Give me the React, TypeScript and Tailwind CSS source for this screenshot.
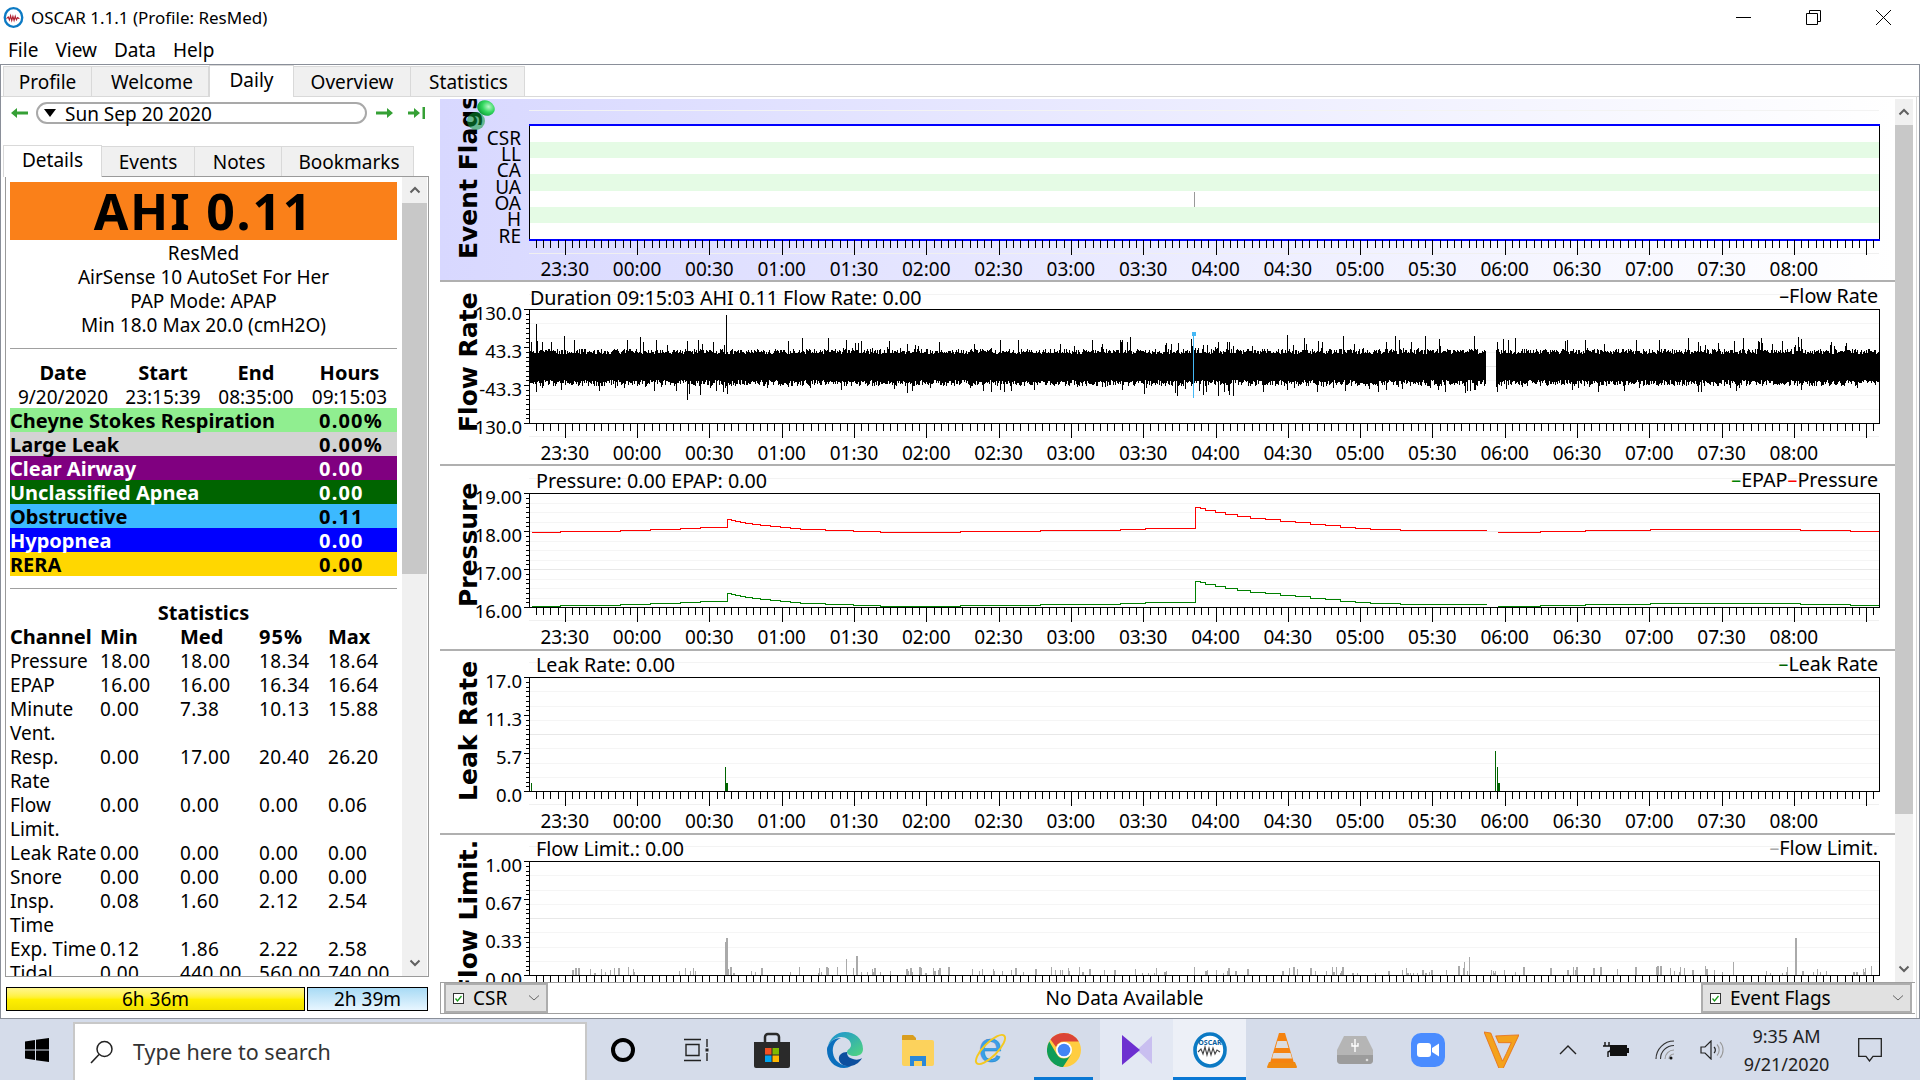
import React from "react";

const times = ["23:30","00:00","00:30","01:00","01:30","02:00","02:30","03:00","03:30","04:00","04:30","05:00","05:30","06:00","06:30","07:00","07:30","08:00"];
const tickBase = 564.8;
const tickStep = 7.23;
const boxLeft = 529;
const boxRight = 1879;

function rng(seed: number) {
  let s = seed;
  return () => {
    s = (s + 0x6d2b79f5) | 0;
    let t = Math.imul(s ^ (s >>> 15), 1 | s);
    t = (t + Math.imul(t ^ (t >>> 7), 61 | t)) ^ t;
    return ((t ^ (t >>> 14)) >>> 0) / 4294967296;
  };
}

function flowPath() {
  const r = rng(11);
  let d = "";
  for (let x = boxLeft + 1; x < boxRight; x++) {
    if (x >= 1486 && x < 1496) continue;
    let top = 354 - r() * 5;
    let bot = 380 + r() * 6;
    if (r() < 0.09) top -= r() * 14;
    if (r() < 0.1) bot += r() * 9;
    d += `M${x} ${top.toFixed(0)}V${bot.toFixed(0)}`;
  }
  const spikes: [number, number, number][] = [
    [536, 324, 392], [726, 315, 385], [687, 341, 400], [643, 342, 380], [1122, 340, 390],
    [1287, 335, 390], [1474, 336, 388], [1497, 342, 392], [1218, 342, 396], [1233, 346, 396],
    [700, 350, 395], [1177, 350, 396], [1229, 342, 395], [1203, 345, 395], [1386, 342, 390],
  ];
  spikes.forEach(([x, a, b]) => (d += `M${x} ${a}V${b}`));
  return d;
}

const pressure: [number, number][] = [
  [532,532],[560,531.5],[590,531],[620,530],[650,529.5],[680,528],[700,527],[727,526],[727,519],[735,521],[745,523],[760,525],[780,527],[800,529],[825,530],[853,531],[880,532],[920,532],[960,531],[1000,531],[1040,530],[1080,530],[1120,529],[1145,528],[1195,527],[1195,507],[1205,510],[1225,514],[1250,518],[1280,521],[1310,524],[1340,527],[1370,529],[1400,530],[1440,530.5],[1486,531],
];
const pressure2: [number, number][] = [[1498,532],[1540,531],[1585,530],[1650,529],[1700,529],[1760,529],[1800,530],[1850,531],[1879,532]];

function steps(pts: [number, number][], dy: number) {
  let d = "";
  pts.forEach(([x, y], i) => {
    if (i === 0) {
      d = `M${x} ${y + dy}`;
      return;
    }
    const [px, py] = pts[i - 1];
    if (x !== px && Math.abs(y - py) >= 2) {
      const mx = (x + px) / 2;
      d += `H${mx}V${(y + py) / 2 + dy}`;
    }
    d += `H${x}V${y + dy}`;
  });
  return d;
}

type GraphProps = {
  top: number;
  height: number;
  boxTop: number;
  label: string;
  labelStart: number;
  title?: string;
  titleX?: number;
  titleY?: number;
  yLabels?: string[];
  divisions?: number;
  major?: number[];
  legend?: { name: string; color: string }[];
  flags?: boolean;
  overlay?: React.ReactNode;
  children?: React.ReactNode;
};

function Graph({ top, height, boxTop, label, labelStart, title, titleX = 536, titleY, yLabels = [], divisions = 8, major = [4], legend = [], flags, overlay, children }: GraphProps) {
  const boxBottom = boxTop + (flags ? 115 : 114);
  let minor = "";
  let majorTicks = "";
  for (let k = -4; k <= 181; k++) {
    const x = Math.round(tickBase + k * tickStep) + 0.5;
    if (k % 10 === 0) majorTicks += `M${x} ${boxBottom}v15`;
    else minor += `M${x} ${boxBottom}v8`;
  }
  const grid: React.ReactNode[] = [];
  let yTicks = "";
  if (!flags) {
    for (let i = 1; i < divisions; i++) {
      const y = Math.round(boxTop + (i * 114) / divisions) + 0.5;
      grid.push(<line key={i} x1={boxLeft} x2={boxRight} y1={y} y2={y} stroke={major.includes(i) ? "#e8e8e8" : "#f5f5f5"} />);
    }
    for (let i = 0; i <= 24; i++) {
      const y = Math.round(boxTop + (i * 114) / 24) + 0.5;
      yTicks += `M${boxLeft} ${y}h${i % 8 === 0 ? -5 : -3}`;
    }
  }
  return (
    <svg viewBox={`440 ${top} 1455 ${height}`} width={1455} height={height} className="block">
      <line x1={boxLeft} x2={boxRight} y1={boxTop - 14.5} y2={boxTop - 14.5} stroke="#f3f3f3" />
      <line x1={boxLeft} x2={boxRight} y1={boxBottom + 13.5} y2={boxBottom + 13.5} stroke="#f0f0f0" />
      {flags && <rect x={boxLeft} y={boxTop} width={boxRight - boxLeft} height={boxBottom - boxTop} fill="#fff" />}
      {grid}
      {children}
      <rect x={boxLeft + 0.5} y={boxTop + 0.5} width={boxRight - boxLeft} height={boxBottom - boxTop} fill="none" stroke="#000" shapeRendering="crispEdges" />
      {flags && (
        <>
          <rect x={boxLeft} y={boxTop - 1} width={boxRight - boxLeft + 1} height={2} fill="#0000ff" />
          <rect x={boxLeft} y={boxBottom - 1} width={boxRight - boxLeft + 1} height={2} fill="#0000ff" />
        </>
      )}
      <path d={minor + majorTicks + yTicks} stroke="#000" fill="none" shapeRendering="crispEdges" />
      {times.map((t, i) => (
        <text key={t} x={tickBase + i * 72.3} y={boxBottom + (flags ? 29 : 30)} textAnchor="middle" dominantBaseline="central" className="text-[19px]">{t}</text>
      ))}
      {yLabels.map((t, i) => (
        <text key={t} x={522} y={boxTop + 3.5 + i * 38} textAnchor="end" dominantBaseline="central" className="text-[18.5px]">{t}</text>
      ))}
      <text transform={`translate(477 ${labelStart}) rotate(-90)`} className="text-[25px] font-bold font-['DejaVu_Sans',sans-serif]">{label}</text>
      {title && <text x={titleX} y={titleY ?? boxTop - 13} dominantBaseline="central" className="text-[19.7px]">{title}</text>}
      {legend.length > 0 && (
        <text x={1878} y={boxTop - 14} textAnchor="end" dominantBaseline="central" className="text-[19.7px]">
          {legend.map((l) => (
            <React.Fragment key={l.name}>
              <tspan fill={l.color}>–</tspan>
              <tspan>{l.name}</tspan>
            </React.Fragment>
          ))}
        </text>
      )}
      {overlay}
    </svg>
  );
}

function EventFlags() {
  const tags = ["CSR", "LL", "CA", "UA", "OA", "H", "RE"];
  const ys = [138, 154, 170, 187, 203, 219, 236];
  return (
    <Graph top={99} height={181} boxTop={125} label="Event Flags" labelStart={259} flags
      overlay={
        <>
          <defs>
            <radialGradient id="pinTop" cx="0.6" cy="0.35" r="0.7">
              <stop offset="0" stopColor="#b8f7c8" />
              <stop offset="0.5" stopColor="#35d860" />
              <stop offset="1" stopColor="#0a9a35" />
            </radialGradient>
          </defs>
          <ellipse cx={476} cy={121} rx={9} ry={9} fill="#0a9a35" fillOpacity={0.55} />
          <ellipse cx={486} cy={108} rx={9} ry={7.5} transform="rotate(25 486 108)" fill="url(#pinTop)" />
        </>
      }>
      <rect x={530} y={142} width={1349} height={16} fill="#e5fbe5" />
      <rect x={530} y={174} width={1349} height={17} fill="#e5fbe5" />
      <rect x={530} y={207} width={1349} height={16} fill="#e5fbe5" />
      <line x1={1194.5} x2={1194.5} y1={192} y2={207} stroke="#999" />
      {tags.map((t, i) => (
        <text key={t} x={521} y={ys[i]} textAnchor="end" dominantBaseline="central" className="text-[19px]">{t}</text>
      ))}
    </Graph>
  );
}

function FlowGraph() {
  return (
    <Graph top={282} height={182} boxTop={309} label="Flow Rate" labelStart={432} title="Duration 09:15:03 AHI 0.11 Flow Rate: 0.00" titleX={530} titleY={297}
      yLabels={["130.0", "43.3", "-43.3", "-130.0"]} legend={[{ name: "Flow Rate", color: "#000" }]}>
      <path d={flowPath()} stroke="#000" strokeWidth={1} shapeRendering="crispEdges" />
      <line x1={1193.5} x2={1193.5} y1={333} y2={398} stroke="#45b8f5" strokeWidth={1} />
      <rect x={1192} y={332} width={4} height={4} fill="#45b8f5" />
    </Graph>
  );
}

function PressureGraph() {
  return (
    <Graph top={466} height={183} boxTop={493} label="Pressure" labelStart={607} title="Pressure: 0.00 EPAP: 0.00"
      yLabels={["19.00", "18.00", "17.00", "16.00"]} divisions={12} major={[4, 8]}
      legend={[{ name: "EPAP", color: "#008000" }, { name: "Pressure", color: "#ff0000" }]}>
      <path d={steps(pressure, 0) + steps(pressure2, 0)} stroke="#ff0000" strokeWidth={1} fill="none" shapeRendering="crispEdges" />
      <path d={steps(pressure, 74) + steps(pressure2, 74)} stroke="#008000" strokeWidth={1} fill="none" shapeRendering="crispEdges" />
    </Graph>
  );
}

function LeakGraph() {
  const bars: [number, number, number][] = [[531, 783, 1], [725, 767, 1], [726, 783, 2], [1495, 751, 1], [1497, 767, 1], [1498, 783, 2]];
  return (
    <Graph top={651} height={182} boxTop={677} label="Leak Rate" labelStart={801} title="Leak Rate: 0.00"
      yLabels={["17.0", "11.3", "5.7", "0.0"]} legend={[{ name: "Leak Rate", color: "#006400" }]}>
      {bars.map(([x, y, w]) => (
        <rect key={x} x={x} y={y} width={w} height={791 - y} fill="#006400" />
      ))}
    </Graph>
  );
}

function LimitGraph() {
  const r = rng(5);
  const bars: [number, number, number][] = [
    [725, 942, 1], [726, 938, 2], [846, 959, 1], [856, 956, 2], [1469, 957, 1], [1464, 962, 1], [1458, 966, 2], [1795, 938, 2],
    [1523, 967, 2], [1656, 967, 1], [1657, 966, 2], [1660, 966, 2], [1692, 970, 2], [1705, 966, 1], [1733, 962, 1], [1786, 972, 2], [1871, 966, 1], [1865, 968, 1],
  ];
  for (let i = 0; i < 170; i++) {
    const x = Math.floor(550 + r() * 1325);
    bars.push([x, 975 - Math.floor(2 + r() * 7), r() < 0.4 ? 2 : 1]);
  }
  return (
    <Graph top={835} height={147} boxTop={861} label="Flow Limit." labelStart={995} title="Flow Limit.: 0.00"
      yLabels={["1.00", "0.67", "0.33", "0.00"]} legend={[{ name: "Flow Limit.", color: "#aaaaaa" }]}>
      {bars.map(([x, y, w], i) => (
        <rect key={i} x={x} y={y} width={w} height={975 - y} fill="#aaaaaa" />
      ))}
    </Graph>
  );
}

function Chevron({ up, className }: { up?: boolean; className?: string }) {
  return (
    <svg viewBox="0 0 12 8" className={className ?? "w-[12px] h-[8px]"}>
      <path d={up ? "M1.5 6.5L6 2l4.5 4.5" : "M1.5 1.5L6 6l4.5-4.5"} fill="none" stroke="#606060" strokeWidth={2} />
    </svg>
  );
}

function Scrollbar({ thumb, wide }: { thumb: string; wide?: boolean }) {
  return (
    <div className={`flex flex-col bg-[#f0f0f0] ${wide ? "w-[25px]" : "w-[18px]"}`}>
      <div className="h-[26px] flex items-center justify-center shrink-0"><Chevron up /></div>
      <div className={`bg-[#c8c8c8] shrink-0 ${thumb}`} />
      <div className="flex-1" />
      <div className="h-[26px] flex items-center justify-center shrink-0"><Chevron /></div>
    </div>
  );
}

function Tab({ label, active, className }: { label: string; active?: boolean; className: string }) {
  return (
    <div className={`flex items-center justify-center border-[#d9d9d9] ${active ? "h-[32px] bg-white border-t border-x pb-[3px] -mb-px relative" : "h-[30px] pt-[2px] bg-[#f0f0f0] border-t border-r"} ${className}`}>
      {label}
    </div>
  );
}

function Arrow({ end, back }: { end?: boolean; back?: boolean }) {
  return (
    <svg viewBox="0 0 18 12" className={`w-[18px] h-[12px] ${back ? "-scale-x-100" : ""}`}>
      <path d={end ? "M0 4.500h6V1l6 5-6 5V7.500H0z" : "M0 4.500h11V1l6 5-6 5V7.500H0z"} fill="#35a035" />
      {end && <rect x={14.500} y={0} width={2.500} height={12} fill="#35a035" />}
    </svg>
  );
}

function OscarLogo({ small }: { small?: boolean }) {
  return (
    <svg viewBox="0 0 34 36" className={small ? "w-[21px] h-[21px]" : "w-[34px] h-[36px]"}>
      <ellipse cx={17} cy={18} rx={15} ry={16} fill="#fff" stroke="#0c7ac4" strokeWidth={small ? 4 : 3.6} />
      {!small && <text x={17} y={13} textAnchor="middle" className="text-[7px] font-bold" fill="#0c5f9e">OSCAR</text>}
      <path d="M5 20l3-3 2 5 2-7 2 8 2-7 2 7 2-7 2 6 2-4 3 2" fill="none" stroke={small ? "#b02030" : "#444"} strokeWidth={small ? 2 : 1.1} />
    </svg>
  );
}

function Combo({ label, className }: { label: string; className: string }) {
  return (
    <div className={`flex items-center h-[30px] bg-[#e1e1e1] border-2 border-[#adadad] ${className}`}>
      <svg viewBox="0 0 11 11" className="w-[11px] h-[11px] ml-[7px] shrink-0">
        <rect x={0.5} y={0.5} width={10} height={10} fill="#fff" stroke="#333" />
        <path d="M2.5 5.5L4.5 8l4-5" fill="none" stroke="#1a9a1a" strokeWidth={1.3} />
      </svg>
      <span className="ml-[9px]">{label}</span>
      <svg viewBox="0 0 12 8" className="w-[12px] h-[8px] ml-auto mr-[6px]">
        <path d="M1 1.5L6 6l5-4.5" fill="none" stroke="#666" />
      </svg>
    </div>
  );
}

function ColourRow({ name, value, className }: { name: string; value: string; className: string }) {
  return (
    <div className={`grid grid-cols-[309px_1fr] h-[24px] font-bold text-[20px] ${className}`}>
      <span className="translate-y-px">{name}</span>
      <span className="translate-y-px tracking-[1.2px]">{value}</span>
    </div>
  );
}

const statRows: string[][] = [
  ["Pressure", "18.00", "18.00", "18.34", "18.64"],
  ["EPAP", "16.00", "16.00", "16.34", "16.64"],
  ["Minute\nVent.", "0.00", "7.38", "10.13", "15.88"],
  ["Resp.\nRate", "0.00", "17.00", "20.40", "26.20"],
  ["Flow\nLimit.", "0.00", "0.00", "0.00", "0.06"],
  ["Leak Rate", "0.00", "0.00", "0.00", "0.00"],
  ["Snore", "0.00", "0.00", "0.00", "0.00"],
  ["Insp.\nTime", "0.08", "1.60", "2.12", "2.54"],
  ["Exp. Time", "0.12", "1.86", "2.22", "2.58"],
  ["Tidal", "0.00", "440.00", "560.00", "740.00"],
];

function LeftColumn() {
  return (
    <div className="w-[439px] shrink-0 flex flex-col">
      <div className="flex items-center h-[22px] mt-[5px]">
        <div className="ml-[9px] w-[18px]"><Arrow back /></div>
        <div className="ml-[8px] w-[331px] h-[22px] rounded-full border-2 border-[#a9a9a9] flex items-center">
          <svg viewBox="0 0 12 8" className="w-[12px] h-[8px] ml-[6px]"><path d="M0 0h12L6 8z" fill="#000" /></svg>
          <span className="ml-[9px] translate-y-px">Sun Sep 20 2020</span>
        </div>
        <div className="ml-[9px] w-[18px]"><Arrow /></div>
        <div className="ml-[14px] w-[18px]"><Arrow end /></div>
      </div>
      <div className="flex items-end h-[32px] mt-[20px] pl-[2px] relative">
        <Tab label="Details" active className="w-[99px]" />
        <Tab label="Events" className="w-[93px]" />
        <Tab label="Notes" className="w-[87px] pl-[2px]" />
        <Tab label="Bookmarks" className="w-[132px] pl-[3px]" />
      </div>
      <div className="ml-[4px] w-[424px] h-[801px] border border-[#9a9a9a] flex">
        <div className="w-[396px] shrink-0 overflow-hidden pl-[4px] pt-[5px] pr-[5px] leading-[24px]">
          <div className="h-[58px] bg-[#fa8019] flex items-center justify-center font-bold text-[50px] tracking-[1.8px] leading-none">AHI 0.11</div>
          <div className="text-center translate-y-px">
            <div>ResMed</div>
            <div>AirSense 10 AutoSet For Her</div>
            <div>PAP Mode: APAP</div>
            <div>Min 18.0 Max 20.0 (cmH2O)</div>
          </div>
          <div className="h-px bg-[#a0a0a0] mt-[12px] mb-[11px]" />
          <div className="grid grid-cols-[106px_94px_92px_95px] text-center translate-y-px">
            <b className="text-[20px]">Date</b><b className="text-[20px]">Start</b><b className="text-[20px]">End</b><b className="text-[20px]">Hours</b>
            <span>9/20/2020</span><span>23:15:39</span><span>08:35:00</span><span>09:15:03</span>
          </div>
          <ColourRow name="Cheyne Stokes Respiration" value="0.00%" className="bg-[#90ee90]" />
          <ColourRow name="Large Leak" value="0.00%" className="bg-[#d3d3d3]" />
          <ColourRow name="Clear Airway" value="0.00" className="bg-[#800080] text-white" />
          <ColourRow name="Unclassified Apnea" value="0.00" className="bg-[#006400] text-white" />
          <ColourRow name="Obstructive" value="0.11" className="bg-[#3cb9ff]" />
          <ColourRow name="Hypopnea" value="0.00" className="bg-[#0000ff] text-white" />
          <ColourRow name="RERA" value="0.00" className="bg-[#ffd700]" />
          <div className="h-px bg-[#a0a0a0] mt-[12px] mb-[11px]" />
          <div className="text-center font-bold text-[20px] translate-y-px">Statistics</div>
          <div className="grid grid-cols-[90px_80px_79px_69px_1fr] translate-y-px">
            <b className="text-[20px]">Channel</b><b className="text-[20px]">Min</b><b className="text-[20px]">Med</b><b className="text-[20px] tracking-[1px]">95%</b><b className="text-[20px]">Max</b>
            {statRows.map((row) =>
              row.map((cell, i) => (
                <span key={row[0] + i} className={`whitespace-pre ${i > 0 ? "tracking-[0.4px]" : ""}`}>{cell}</span>
              ))
            )}
          </div>
        </div>
        <Scrollbar wide thumb="h-[371px]" />
      </div>
      <div className="ml-[5px] w-[422px] h-[24px] mt-[10px] flex gap-[2px] text-center leading-[22px]">
        <div className="w-[299px] border border-black bg-linear-to-b from-[#fff68a] via-[#fff000] to-[#f0e000]">6h 36m</div>
        <div className="flex-1 border border-black bg-linear-to-b from-[#a8dbf5] via-[#c8e8fa] to-[#e8f6ff]">2h 39m</div>
      </div>
    </div>
  );
}

function RightColumn() {
  return (
    <div className="w-[1477px] shrink-0 flex flex-col border-r border-[#d9d9d9] pt-[2px]">
      <div className="h-[883px] flex overflow-hidden">
        <div className="w-[1455px] shrink-0">
          <div className="h-[183px] border-b-2 border-[#b0b0b0] bg-linear-to-r from-[#d8d8ff] to-white"><EventFlags /></div>
          <div className="h-[184px] border-b-2 border-[#b0b0b0]"><FlowGraph /></div>
          <div className="h-[185px] border-b-2 border-[#b0b0b0]"><PressureGraph /></div>
          <div className="h-[184px] border-b-2 border-[#b0b0b0]"><LeakGraph /></div>
          <div className="h-[147px]"><LimitGraph /></div>
        </div>
        <Scrollbar thumb="h-[689px]" />
      </div>
      <div className="h-[32px] mr-[1px] flex items-center border-y border-l border-[#a0a0a0]">
        <Combo label="CSR" className="w-[104px] ml-[3px]" />
        <div className="flex-1 text-center pt-[1px]">No Data Available</div>
        <Combo label="Event Flags" className="w-[211px] mr-[3px]" />
      </div>
    </div>
  );
}

function TaskIcon({ children, className = "" }: { children: React.ReactNode; className?: string }) {
  return <div className={`w-[72.9px] h-full shrink-0 flex items-center justify-center ${className}`}>{children}</div>;
}

function Taskbar() {
  return (
    <div className="h-[61px] bg-[#d5dcea] flex text-[#1c1c1c]">
      <div className="w-[73px] flex items-center justify-center">
        <svg viewBox="0 0 24 24" className="w-[24px] h-[24px]">
          <path d="M0 3.4L10 2v9.5H0zM11 1.8L24 0v11.5H11zM0 12.5h10V22L0 20.6zM11 12.5h13V24l-13-1.8z" fill="#000" />
        </svg>
      </div>
      <div className="w-[514px] mt-[3px] bg-white border-x-2 border-t-2 border-[#c8c8c8] flex items-center text-[#333] text-[21.500px]">
        <svg viewBox="0 0 24 24" className="w-[24px] h-[24px] ml-[15px]">
          <circle cx={14.5} cy={9} r={7.5} fill="none" stroke="#222" strokeWidth={1.5} />
          <path d="M9 14.5L1 23" stroke="#222" strokeWidth={1.6} />
        </svg>
        <span className="ml-[19px]">Type here to search</span>
      </div>
      <TaskIcon>
        <div className="w-[24px] h-[24px] rounded-full border-[4px] border-black" />
      </TaskIcon>
      <TaskIcon>
        <svg viewBox="0 0 26 24" className="w-[26px] h-[24px]">
          <path d="M1 1.5h17M1 22.5h17M3 6.5h13v11H3zM24 1v8M24 15v8" fill="none" stroke="#222" strokeWidth={1.4} />
          <rect x={22.5} y={10.5} width={3} height={3} fill="#222" />
        </svg>
      </TaskIcon>
      <TaskIcon className="ml-[3px]">
        <svg viewBox="0 0 36 36" className="w-[36px] h-[36px]">
          <path d="M11 10V5a3 3 0 013-3h8a3 3 0 013 3v5" fill="none" stroke="#2a2a2a" strokeWidth={2.5} />
          <path d="M0 10h36v24a2 2 0 01-2 2H2a2 2 0 01-2-2z" fill="#2a2a2a" />
          <rect x={11} y={16} width={6.5} height={6.5} fill="#f25022" />
          <rect x={18.5} y={16} width={6.5} height={6.5} fill="#7fba00" />
          <rect x={11} y={23.5} width={6.5} height={6.5} fill="#00a4ef" />
          <rect x={18.5} y={23.5} width={6.5} height={6.5} fill="#ffb900" />
        </svg>
      </TaskIcon>
      <TaskIcon>
        <svg viewBox="0 0 36 36" className="w-[36px] h-[36px]">
          <defs>
            <linearGradient id="edgeTop" x1="0" y1="0" x2="1" y2="1">
              <stop offset="0" stopColor="#1a8fd8" />
              <stop offset="1" stopColor="#52d67e" />
            </linearGradient>
          </defs>
          <path d="M18 0c10 0 18 7 18 17 0 5-4 7-8 7-5 0-8-2-8-4 0-3 4-3 4-7 0-5-5-8-10-8C8 5 2 11 1 14 3 6 10 0 18 0z" fill="url(#edgeTop)" />
          <path d="M1 14C3 9 8 6 14 6c-6 2-9 8-8 15 1 8 9 14 18 13-2 1-4 2-7 2C7 36 0 28 0 18c0-1 0-3 1-4z" fill="#0b6fbd" />
          <path d="M20 20c-5 0-9 3-8 8 1 4 6 7 12 6 5-1 9-4 11-8-3 2-6 2-9 1-4-1-6-3-6-7z" fill="#0d4f9e" />
        </svg>
      </TaskIcon>
      <TaskIcon>
        <svg viewBox="0 0 32 32" className="w-[32px] h-[32px]">
          <path d="M0 2a1 1 0 011-1h10l3 3v5H0z" fill="#d99e1f" />
          <path d="M0 6h30a2 2 0 012 2v22a2 2 0 01-2 2H2a2 2 0 01-2-2z" fill="#fcd25c" />
          <path d="M8 32V22h16v10h-4v-5h-8v5z" fill="#2b88d8" />
        </svg>
      </TaskIcon>
      <TaskIcon>
        <svg viewBox="0 0 36 36" className="w-[35px] h-[35px]">
          <text x={18} y={31} textAnchor="middle" fill="#3aa0e8" stroke="#1f7fc8" strokeWidth={0.5} className="text-[44px] font-['Liberation_Sans',sans-serif]">e</text>
          <ellipse cx={18} cy={18} rx={20} ry={7} transform="rotate(-45 18 18)" fill="none" stroke="#f4c820" strokeWidth={2} />
        </svg>
      </TaskIcon>
      <TaskIcon className="relative after:absolute after:bottom-0 after:left-[7px] after:right-[7px] after:h-[3px] after:bg-[#0a78d4]">
        <svg viewBox="0 0 34 34" className="w-[34px] h-[34px]">
          <circle cx={17} cy={17} r={17} fill="#ffcd40" />
          <path d="M17 0a17 17 0 0114.7 8.5H17a8.5 8.5 0 00-8 5.5L3.5 6.5A17 17 0 0117 0z" fill="#db4437" />
          <path d="M2.3 8.5L9.6 21 15 34A17 17 0 012.3 8.5z" fill="#0f9d58" />
          <path d="M9.6 21.3a8.5 8.5 0 0014.7 0L16 34h-1A17 17 0 013 25z" fill="#0f9d58" />
          <circle cx={17} cy={17} r={8} fill="#fff" />
          <circle cx={17} cy={17} r={6.3} fill="#4285f4" />
        </svg>
      </TaskIcon>
      <TaskIcon className="bg-[#e3e8f3]">
        <svg viewBox="0 0 32 34" className="w-[32px] h-[34px]">
          <path d="M16 17L31 3v28z" fill="#c9bff0" />
          <path d="M1 2l18 15L1 32z" fill="#6d2fd0" />
        </svg>
      </TaskIcon>
      <TaskIcon className="bg-[#edf0f7] relative after:absolute after:bottom-0 after:left-0 after:right-0 after:h-[3px] after:bg-[#0a78d4]">
        <OscarLogo />
      </TaskIcon>
      <TaskIcon>
        <svg viewBox="0 0 30 36" className="w-[30px] h-[36px]">
          <path d="M2 30h26l2 5a1 1 0 01-1 1H1a1 1 0 01-1-1z" fill="#f08a10" />
          <path d="M12 1h6l9 30H3z" fill="#f5830f" />
          <path d="M10.5 9h9l2 7H8.500zM6.5 21h17l1.500 5.500H5z" fill="#ddd" />
        </svg>
      </TaskIcon>
      <TaskIcon>
        <svg viewBox="0 0 36 30" className="w-[36px] h-[30px]">
          <path d="M7 1h22l7 14v10a4 4 0 01-4 4H4a4 4 0 01-4-4V15z" fill="#b5b5b5" />
          <path d="M0 20h36v5a4 4 0 01-4 4H4a4 4 0 01-4-4z" fill="#9c9c9c" />
          <path d="M18 4v13M15 8v3h6V8" fill="none" stroke="#fff" strokeWidth={1.4} />
          <circle cx={30} cy={25} r={1.3} fill="#ddd" />
        </svg>
      </TaskIcon>
      <TaskIcon>
        <div className="w-[34px] h-[34px] rounded-[10px] bg-[#4a8cff] flex items-center justify-center">
          <svg viewBox="0 0 22 14" className="w-[22px] h-[14px]">
            <rect x={0} y={0} width={14} height={14} rx={3} fill="#fff" />
            <path d="M15 5l7-4.500v13L15 9z" fill="#fff" />
          </svg>
        </div>
      </TaskIcon>
      <TaskIcon>
        <svg viewBox="0 0 36 38" className="w-[35px] h-[37px]">
          <path d="M0 1l7 1 12 29 4-8 5-11H15l-3-7 24-1-17 36h-3z" fill="#f4a21c" stroke="#e86a10" strokeWidth={0.8} />
        </svg>
      </TaskIcon>
      <div className="ml-auto flex h-full items-center">
        <div className="w-[48px] flex justify-center">
          <svg viewBox="0 0 18 10" className="w-[18px] h-[10px]"><path d="M1 9l8-8 8 8" fill="none" stroke="#222" strokeWidth={1.4} /></svg>
        </div>
        <div className="w-[48px] flex justify-center">
          <svg viewBox="0 0 26 16" className="w-[26px] h-[16px]">
            <path d="M2 0v4M6 0v4M0 4h8v3a4 4 0 01-3 3v5" fill="none" stroke="#111" strokeWidth={1.4} />
            <rect x={7} y={3} width={17} height={11} fill="#111" />
            <rect x={24} y={6} width={2} height={5} fill="#111" />
          </svg>
        </div>
        <div className="w-[50px] flex justify-center">
          <svg viewBox="0 0 20 20" className="w-[20px] h-[20px]">
            <path d="M1 19A18 18 0 0119 1M5.500 19A13.500 13.500 0 0119 5.500" fill="none" stroke="#333" strokeWidth={1.1} />
            <path d="M10 19a9 9 0 019-9M14 19a5 5 0 015-5" fill="none" stroke="#999" strokeWidth={1.1} />
            <circle cx={16} cy={18} r={1.500} fill="#111" />
          </svg>
        </div>
        <div className="w-[43px] flex justify-center">
          <svg viewBox="0 0 24 20" className="w-[24px] h-[20px]">
            <path d="M1 7h4l6-6v18l-6-6H1z" fill="none" stroke="#222" strokeWidth={1.2} />
            <path d="M14 7a4 4 0 010 6" fill="none" stroke="#222" strokeWidth={1.2} />
            <path d="M17 4.500a8 8 0 010 11M20 2a12 12 0 010 16" fill="none" stroke="#999" strokeWidth={1.1} />
          </svg>
        </div>
        <div className="w-[107px] text-center text-[18px] leading-[28px] text-[#222]">
          <div>9:35 AM</div>
          <div>9/21/2020</div>
        </div>
        <div className="w-[60px] flex justify-center">
          <svg viewBox="0 0 24 24" className="w-[24px] h-[24px]"><path d="M.7.7h22.600v17.600H15L11.500 23 8 18.300H.7z" fill="none" stroke="#222" strokeWidth={1.3} /></svg>
        </div>
        <div className="w-[20px]" />
      </div>
    </div>
  );
}

export default function App() {
  return (
    <div className="w-[1920px] h-[1080px] overflow-hidden bg-white flex flex-col text-[19px] text-black font-['Noto_Sans',sans-serif]">
      <div className="h-[36px] pb-[1px] flex items-center text-[17px]">
        <div className="ml-[3px]"><OscarLogo small /></div>
        <span className="ml-[7px]">OSCAR 1.1.1 (Profile: ResMed)</span>
        <div className="ml-auto flex pr-[2px]">
          <div className="w-[70px] flex justify-center items-center h-[32px]"><div className="w-[15px] h-px bg-black" /></div>
          <div className="w-[70px] flex justify-center items-center h-[32px]">
            <svg viewBox="0 0 15 15" className="w-[15px] h-[15px]"><path d="M.5 3.500h11v11H.5zM3.500 3.500v-3h11v11h-3" fill="none" stroke="#000" /></svg>
          </div>
          <div className="w-[70px] flex justify-center items-center h-[32px]">
            <svg viewBox="0 0 15 15" className="w-[15px] h-[15px]"><path d="M0 0l15 15M15 0L0 15" fill="none" stroke="#000" /></svg>
          </div>
        </div>
      </div>
      <div className="h-[28px] flex items-center gap-[17px] pl-[8px]">
        <span>File</span><span>View</span><span>Data</span><span>Help</span>
      </div>
      <div className="h-[955px] border border-[#8a8f99] flex flex-col">
        <div className="h-[32px] flex items-end pl-[2px] border-b border-[#d9d9d9] shrink-0">
          <Tab label="Profile" className="w-[89px] border-l" />
          <Tab label="Welcome" className="w-[117px] pl-[4px]" />
          <Tab label="Daily" active className="w-[85px]" />
          <Tab label="Overview" className="w-[117px]" />
          <Tab label="Statistics" className="w-[114px] pl-[2px]" />
        </div>
        <div className="flex flex-1 min-h-0">
          <LeftColumn />
          <RightColumn />
        </div>
      </div>
      <Taskbar />
    </div>
  );
}
